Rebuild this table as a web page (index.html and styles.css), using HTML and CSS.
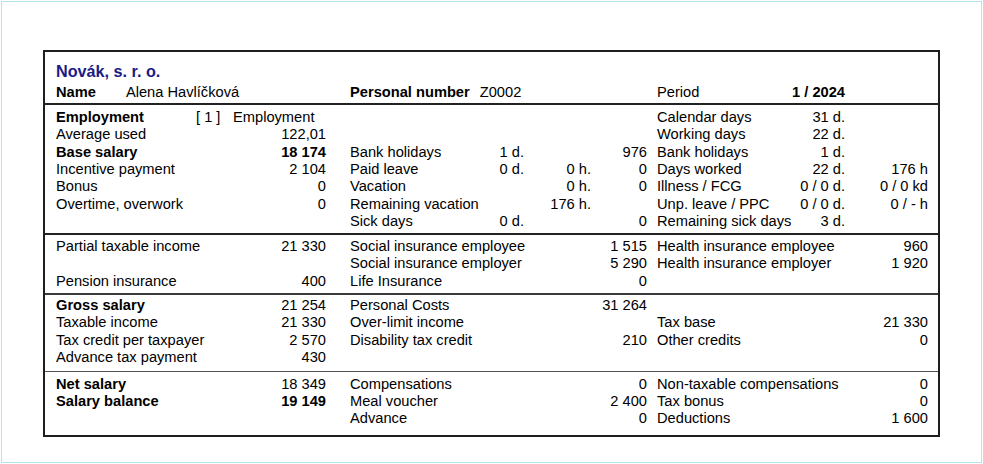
FILE: index.html
```html
<!DOCTYPE html>
<html lang="en">
<head>
<meta charset="utf-8">
<title>Payslip</title>
<link rel="stylesheet" href="styles.css">
</head>
<body>
<div class="frame">
  <div class="slip">
    <header class="head">
      <div class="company">Novák, s. r. o.</div>
      <div class="row">
        <span class="l1 span12"><b>Name</b><span class="name-val">Alena Havlíčková</span></span>
        <span class="l2 span47"><b>Personal number</b><span class="pn">Z0002</span></span>
        <span class="l3">Period</span>
        <span class="d3 b">1 / 2024</span>
      </div>
    </header>

    <section class="sec s1">
      <div class="row">
        <span class="l1 span12"><b class="emp-label">Employment</b><span class="emp-no">[ 1 ]</span>Employment</span>
        <span class="l3">Calendar days</span><span class="d3">31 d.</span>
      </div>
      <div class="row">
        <span class="l1">Average used</span><span class="v1">122,01</span>
        <span class="l3">Working days</span><span class="d3">22 d.</span>
      </div>
      <div class="row">
        <span class="l1 b">Base salary</span><span class="v1 b">18 174</span>
        <span class="l2">Bank holidays</span><span class="d2">1 d.</span><span class="v2">976</span>
        <span class="l3">Bank holidays</span><span class="d3">1 d.</span>
      </div>
      <div class="row">
        <span class="l1">Incentive payment</span><span class="v1">2 104</span>
        <span class="l2">Paid leave</span><span class="d2">0 d.</span><span class="h2">0 h.</span><span class="v2">0</span>
        <span class="l3">Days worked</span><span class="d3">22 d.</span><span class="v3">176 h</span>
      </div>
      <div class="row">
        <span class="l1">Bonus</span><span class="v1">0</span>
        <span class="l2">Vacation</span><span class="h2">0 h.</span><span class="v2">0</span>
        <span class="l3">Illness / FCG</span><span class="d3">0 / 0 d.</span><span class="v3">0 / 0 kd</span>
      </div>
      <div class="row">
        <span class="l1">Overtime, overwork</span><span class="v1">0</span>
        <span class="l2">Remaining vacation</span><span class="h2">176 h.</span>
        <span class="l3">Unp. leave / PPC</span><span class="d3">0 / 0 d.</span><span class="v3">0 / - h</span>
      </div>
      <div class="row">
        <span class="l2">Sick days</span><span class="d2">0 d.</span><span class="v2">0</span>
        <span class="l3">Remaining sick days</span><span class="d3">3 d.</span>
      </div>
    </section>

    <section class="sec s2">
      <div class="row">
        <span class="l1">Partial taxable income</span><span class="v1">21 330</span>
        <span class="l2">Social insurance employee</span><span class="v2">1 515</span>
        <span class="l3">Health insurance employee</span><span class="v3">960</span>
      </div>
      <div class="row">
        <span class="l2">Social insurance employer</span><span class="v2">5 290</span>
        <span class="l3">Health insurance employer</span><span class="v3">1 920</span>
      </div>
      <div class="row">
        <span class="l1">Pension insurance</span><span class="v1">400</span>
        <span class="l2">Life Insurance</span><span class="v2">0</span>
      </div>
    </section>

    <section class="sec s3">
      <div class="row">
        <span class="l1 b">Gross salary</span><span class="v1">21 254</span>
        <span class="l2">Personal Costs</span><span class="v2">31 264</span>
      </div>
      <div class="row">
        <span class="l1">Taxable income</span><span class="v1">21 330</span>
        <span class="l2">Over-limit income</span>
        <span class="l3">Tax base</span><span class="v3">21 330</span>
      </div>
      <div class="row">
        <span class="l1">Tax credit per taxpayer</span><span class="v1">2 570</span>
        <span class="l2">Disability tax credit</span><span class="v2">210</span>
        <span class="l3">Other credits</span><span class="v3">0</span>
      </div>
      <div class="row">
        <span class="l1">Advance tax payment</span><span class="v1">430</span>
      </div>
    </section>

    <section class="sec s4">
      <div class="row">
        <span class="l1 b">Net salary</span><span class="v1">18 349</span>
        <span class="l2">Compensations</span><span class="v2">0</span>
        <span class="l3">Non-taxable compensations</span><span class="v3">0</span>
      </div>
      <div class="row">
        <span class="l1 b">Salary balance</span><span class="v1 b">19 149</span>
        <span class="l2">Meal voucher</span><span class="v2">2 400</span>
        <span class="l3">Tax bonus</span><span class="v3">0</span>
      </div>
      <div class="row">
        <span class="l2">Advance</span><span class="v2">0</span>
        <span class="l3">Deductions</span><span class="v3">1 600</span>
      </div>
    </section>
  </div>
</div>
</body>
</html>
```

FILE: styles.css
```css
html, body {
  margin: 0;
  padding: 0;
  background: #fff;
}

body {
  font-family: "Liberation Sans", Arial, sans-serif;
  font-size: 14.67px;
  color: #000;
}

.frame {
  box-sizing: border-box;
  margin: 1px 0 0 1px;
  width: 981px;
  height: 462px;
  border: 1px solid #b2e2f4;
  padding: 48px 0 0 41px;
}

.slip {
  box-sizing: border-box;
  width: 897px;
  border: 2px solid #1e1e1e;
}

.head {
  padding: 9px 10px 2px 11px;
  border-bottom: 2px solid #222;
}

.company {
  font-size: 16.2px;
  font-weight: bold;
  color: #1b1b86;
  line-height: 20px;
  margin-bottom: 2px;
}

.head .row {
  height: 18px;
  line-height: 18px;
}

.row {
  display: grid;
  grid-template-columns: 190px 80px 24px 120px 54px 67px 56px 10px 128px 60px 83px;
  height: 17.4px;
  line-height: 17.4px;
  white-space: nowrap;
}

.sec {
  padding-left: 11px;
  padding-right: 10px;
}

.s1 { padding-top: 3.8px; padding-bottom: 2.2px; border-bottom: 2px solid #222; }
.s2 { padding-top: 3px; padding-bottom: 3px; border-bottom: 2px solid #3a3a3a; }
.s3 { padding-top: 2px; padding-bottom: 4.4px; border-bottom: 1px solid #555; }
.s4 { padding-top: 3.8px; padding-bottom: 7px; }

.b { font-weight: bold; }

.l1 { grid-column: 1; }
.v1 { grid-column: 2; text-align: right; }
.l2 { grid-column: 4; }
.d2 { grid-column: 5; text-align: right; }
.h2 { grid-column: 6; text-align: right; }
.v2 { grid-column: 7; text-align: right; }
.l3 { grid-column: 9; }
.d3 { grid-column: 10; text-align: right; }
.v3 { grid-column: 11; text-align: right; }

.span12 { grid-column: 1 / 3; }
.span47 { grid-column: 4 / 8; }

.name-val { margin-left: 30px; }
.pn { margin-left: 10px; }

.emp-label {
  display: inline-block;
  width: 140px;
}

.emp-no {
  display: inline-block;
  width: 37px;
}
```
